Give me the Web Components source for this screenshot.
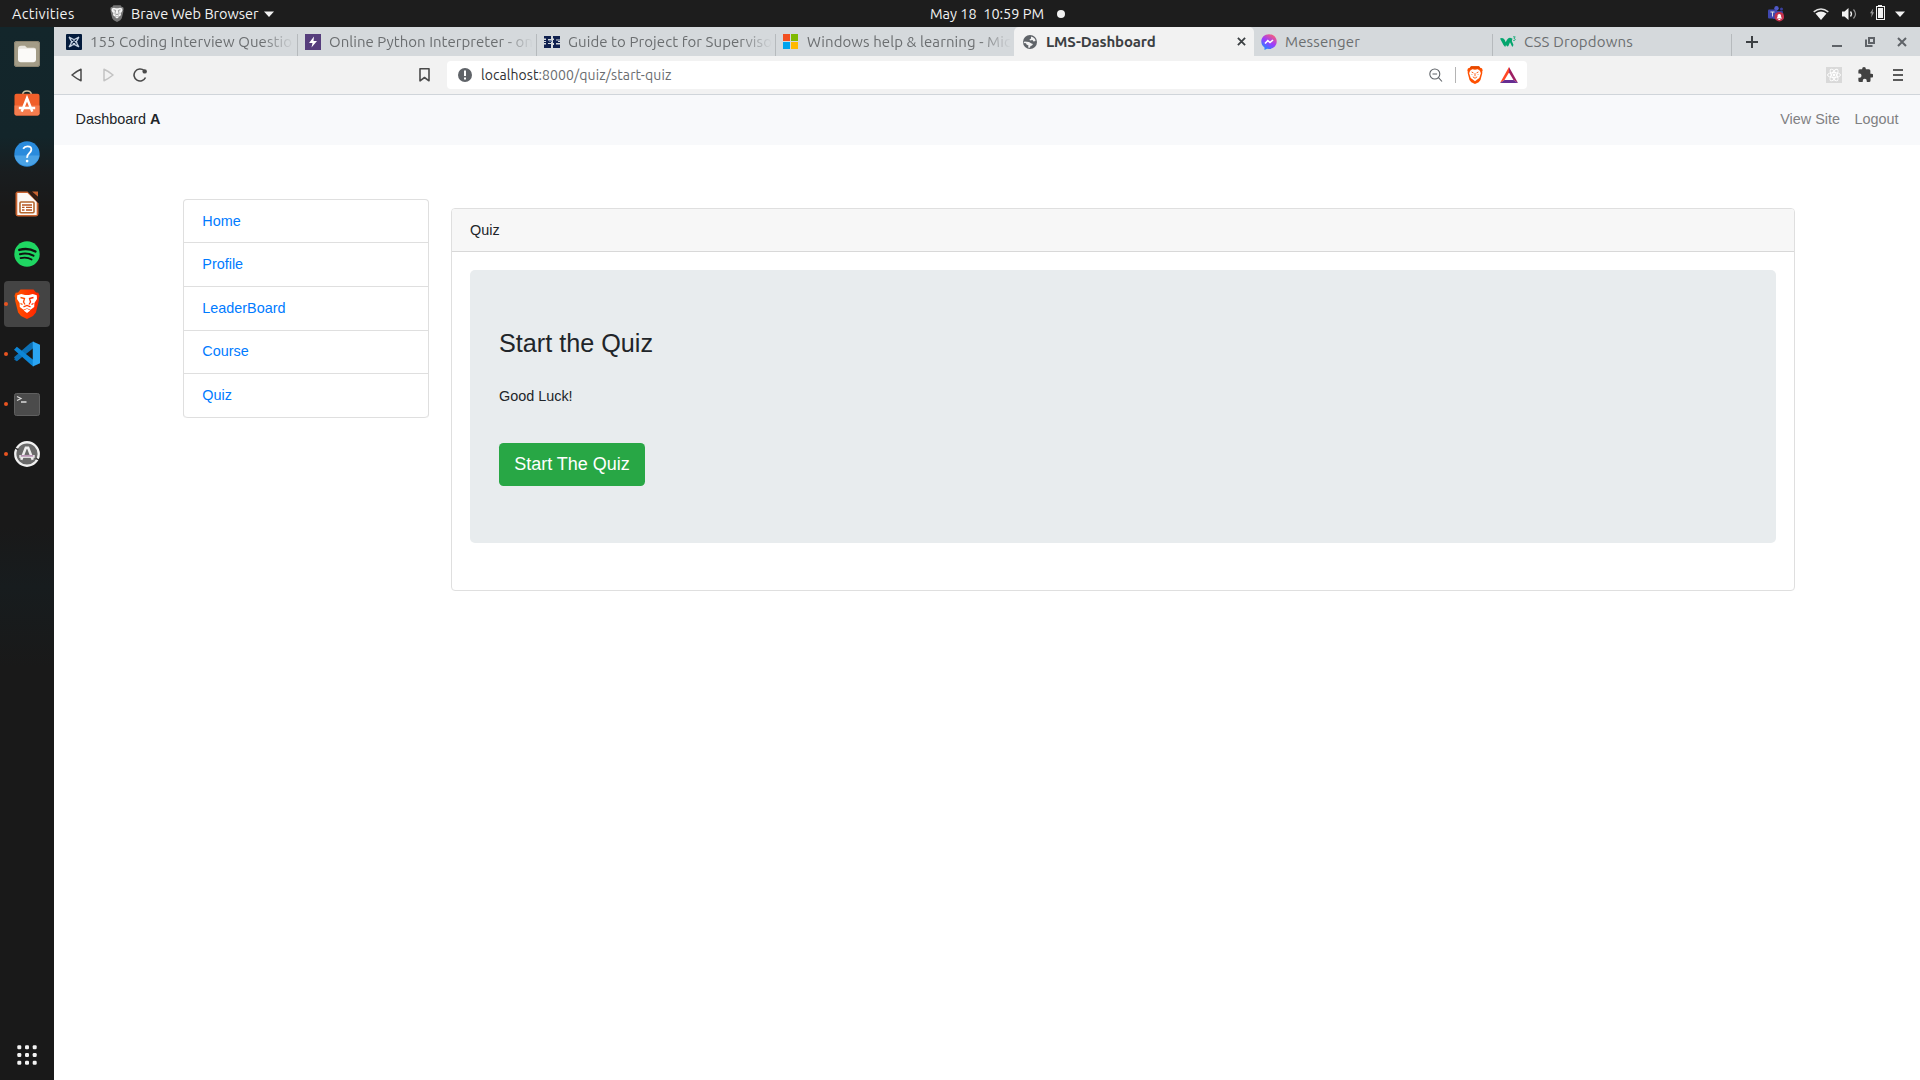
<!DOCTYPE html>
<html lang="en">
<head>
<meta charset="utf-8">
<title>LMS-Dashboard</title>
<style>
html,body{margin:0;height:100%;overflow:hidden;background:#fff}
body{font-family:"Liberation Sans",Arial,sans-serif;font-size:14.4px;color:#212529}
</style>
</head>
<body>
<desk-top></desk-top>
<script>
const UI = 'Ubuntu,"Noto Sans","Open Sans",sans-serif';
function define(name, html, after) {
  const t = document.createElement('template');
  t.innerHTML = html;
  customElements.define(name, class extends HTMLElement {
    connectedCallback() {
      if (this.shadowRoot) return;
      this.attachShadow({mode: 'open'}).append(t.content.cloneNode(true));
      if (after) after(this, this.shadowRoot);
    }
  });
}

/* Interface label: spaces its letters so that the line takes the width given in w. */
define('ui-label', `<style>:host{display:inline-block;white-space:pre;font-family:${UI}}span{display:inline-block;white-space:pre}</style><span><slot></slot></span>`, (el, root) => {
  const s = root.querySelector('span'), w = +el.getAttribute('w');
  if (w) {
    const n = el.textContent.length;
    s.style.letterSpacing = ((w - s.getBoundingClientRect().width) / n) + 'px';
  }
});

/* Icons */
const lion = (a, b) => `<path fill="${a}" d="M6.500.5h13l2.500 3 2.300.2 1.200 3.300-.8 2.500.2 2-3 12L19 27l-6 3-6-3-2.900-3.500-3-12 .2-2L.5 7l1.200-3.300L4 3.500z"/><path fill="${b}" d="M3.200 6.300L7.300 4.900l3.700 1h4l3.700-1 4.100 1.400.2 3.700-2.600 4-.2 4-3.700 2.700L13 19.300l-3.500 1.400L5.800 18l-.2-4L3 10zM9.700 21.500l3.300-1.700 3.300 1.700-3.300 2.500z"/><path d="M6.500 8.500L10.500 9.500 9.500 13l1.500 2.500M19.500 8.500L15.500 9.500l1 3.500-1.500 2.500M6.500 14.500l2 1M19.500 14.500l-2 1M9.500 17.800l3.500-1.300 3.500 1.300" fill="none" stroke="${a}" stroke-width="1.300"/>`;
const ICONS = {
  lion: [26, 30, `<defs><linearGradient id="g"><stop stop-color="#ff5500"/><stop offset="1" stop-color="#ff2000"/></linearGradient></defs>` + lion('url(#g)', '#fff')],
  liongrey: [26, 30, lion('#777', '#f4f4f4')],
  shield: [26, 30, `<path fill="#ff5000" d="M6.500.5h13l2.500 3 2.300.2 1.200 3.300-.8 2.500.2 2-3 12L19 27l-6 3-6-3-2.900-3.500-3-12 .2-2L.5 7l1.200-3.300L4 3.500z"/><path fill="#fff" d="M5 8l3.500-2.500 4.500.7 4.500-.7L21 8l1.500 4-2.500 8-4 3-3 2.500L10 23l-4-3-2.500-8z"/><path d="M7.500 10l3 1.500M18.500 10l-3 1.500M8 14v1M18 14v1M13 12v5M9.500 18l3.500 2.500 3.500-2.500" fill="none" stroke="#ff5000" stroke-width="1.500"/><path fill="#e34800" d="M6.500.5h13L22 4H4z"/>`],
  down: [10, 6, `<path fill="#f2f2f2" d="M0 .5h10L5 6z"/>`],
  coding: [16, 16, `<rect width="16" height="16" rx="1" fill="#031b3c"/><g fill="none" stroke="#c5d2e2" stroke-width="1.100"><path d="M3 3q5 4.500 10 0M3 13q5-4.500 10 0M3 3q4.500 5 0 10M13 3q-4.500 5 0 10M3 3q7 3 10 10M13 3q-7 3-10 10M3 3q3 7 10 10M13 3q-3 7-10 10"/></g>`],
  bolt: [16, 16, `<rect width="16" height="16" fill="#563d7c"/><path fill="#fff" d="M9 2.500L4 9h3.500L6.500 13.500 12 7H8.500z"/>`],
  guide: [16, 14, `<path fill="#10214f" d="M0 1h7v3H4v1.500h3V8H4v1h3v4H0v-3.500h2V8H0V5h2V3.500H0zM9 1h7v3.500h-4v1h4V8h-4v1.500h4V13H9v-3h1V8H9V5h1V3.500H9z"/><path fill="#5a6f98" d="M5 5.500h3v1.500H5z"/><path d="M0 6.500h2M14 6.500h2" stroke="#d5d9dc"/>`],
  windows: [15, 15, `<path fill="#f25022" d="M0 0h7v7H0z"/><path fill="#7fba00" d="M8 0h7v7H8z"/><path fill="#00a4ef" d="M0 8h7v7H0z"/><path fill="#ffb900" d="M8 8h7v7H8z"/>`],
  globe: [14, 14, `<circle cx="7" cy="7" r="7" fill="#5f6368"/><path fill="#f2f2f2" d="M8 1.500c3 .5 4.500 2.500 4.500 4.500l-2 .5-1-1.500-2.500.5-.5-1 1.500-1zM1.500 6.500l4.500.5 2.500 1.500 1.500.5-1 1.500-1.500.5-.5 1.700-2-.2.500-2-2-1-.5-1.200-2.500-.3z"/>`],
  messenger: [16, 16, `<defs><linearGradient id="m" x1=".2" y1="1" x2=".8" y2="0"><stop stop-color="#1490ff"/><stop offset=".5" stop-color="#9a3cff"/><stop offset="1" stop-color="#ff6070"/></linearGradient></defs><path fill="url(#m)" d="M8 .3c4.500 0 7.700 3.200 7.700 7.300S12.500 15 8 15l-2-.2L3.500 16v-2.500C1.500 12.200.3 10.200.3 7.600.3 3.500 3.500.3 8 .3z"/><path d="M4 9.500L6.800 6.700 9 8.500l3-2.500" fill="none" stroke="#fff" stroke-width="1.600"/>`],
  w3: [16, 12, `<path fill="#04a56d" d="M0 2.500Q3 .8 4.800 4l.9 2.200L7 3.800Q8.800.8 11 2l1.500.8Q12 4 11.800 5l1.700 4-1.200 2L10 6.200 8.600 9.500Q7.500 11.500 6 9L5.200 11 3.500 9z"/><path d="M13 .8h2.200L14 2.500c2 0 1.500 2.500-.8 2" fill="none" stroke="#04a56d" stroke-width=".8"/>`],
  x: [10, 10, `<path d="M1 1l8 8M9 1L1 9" stroke="currentColor" stroke-width="2"/>`],
  plus: [12, 12, `<path d="M6 0v12M0 6h12" stroke="#3c4043" stroke-width="2"/>`],
  min: [10, 10, `<path d="M0 9h10" stroke="#5f6368" stroke-width="2"/>`],
  restore: [10, 10, `<path d="M4 1h5v5H4zM1 2.500V9h6.500" fill="none" stroke="#5f6368" stroke-width="2"/>`],
  back: [11, 14, `<path d="M10 1.300v11.400Q6 11 1 7 6 3 10 1.300z" fill="none" stroke="#4a4a4a" stroke-width="1.500" stroke-linejoin="round"/>`],
  fwd: [11, 14, `<path d="M1 1.300v11.400Q5 11 10 7 5 3 1 1.300z" fill="none" stroke="#c3c3c3" stroke-width="1.500" stroke-linejoin="round"/>`],
  reload: [14, 14, `<path d="M11.200 2.700A6 6 0 1 0 12.500 9.500" fill="none" stroke="#4a4a4a" stroke-width="1.600"/><circle cx="11.700" cy="3.400" r="2.200" fill="#4a4a4a"/>`],
  mark: [11, 14, `<path d="M1 .8h9v12L5.500 9.500 1 12.800z" fill="none" stroke="#4a4a4a" stroke-width="1.600" stroke-linejoin="round"/>`],
  info: [14, 14, `<circle cx="7" cy="7" r="7" fill="#5f6368"/><path fill="#fff" d="M6 2.500h2v5.500H6zM6 9.500h2v2H6z"/>`],
  zoomout: [14, 14, `<circle cx="5.800" cy="6" r="5" fill="none" stroke="#5f6368" stroke-width="1.100"/><path d="M3.500 6h4.600M9.500 9.700L13 13.500" stroke="#5f6368" stroke-width="1.100"/>`],
  bat: [18, 16, `<path fill="#ff4724" d="M9 0v5.500L4.500 13 0 16z"/><path fill="#9e1f63" d="M9 0l9 16-4.500-3L9 5.500z"/><path fill="#662d91" d="M0 16l4.500-3h9l4.500 3z"/>`],
  react: [16, 16, `<path fill="#d9d9d9" d="M0 0h16v16H0z"/><g fill="none" stroke="#fff" stroke-width=".9"><ellipse cx="8" cy="8" rx="6.500" ry="2.500"/><ellipse cx="8" cy="8" rx="6.500" ry="2.500" transform="rotate(60 8 8)"/><ellipse cx="8" cy="8" rx="6.500" ry="2.500" transform="rotate(120 8 8)"/></g><circle cx="8" cy="8" r="1.400" fill="#fff"/>`],
  puzzle: [20, 20, `<path fill="#424242" d="M18 9h-1.500V5a2 2 0 0 0-2-2h-4V2.500a2.500 2.500 0 0 0-5 0V3h-3a2 2 0 0 0-2 2v3.800H2a2.700 2.700 0 0 1 0 5.400H.5V18a2 2 0 0 0 2 2h3.800v-1.500a2.700 2.700 0 0 1 5.400 0V20h3a2 2 0 0 0 2-2v-4H18a2.500 2.500 0 0 0 0-5z"/>`],
  menu: [10, 12, `<path d="M0 1h10M0 6h10M0 11h10" stroke="#5a5a5a" stroke-width="2"/>`],
  teams: [16, 16, `<circle cx="8.500" cy="2.200" r="2.200" fill="#5059c9"/><circle cx="13.500" cy="3" r="1.500" fill="#3a3f9c"/><rect x="5" y="5" width="10" height="8" rx="1" fill="#3a3f9c"/><rect y="3.500" width="9" height="9" rx="1" fill="#4048b0"/><path d="M2.500 6h4M4.500 6v4.500" stroke="#ddd" stroke-width="1"/><circle cx="11.300" cy="10.700" r="4.800" fill="#c4314b"/><path fill="#fff" d="M8.500 12.500l1-1.500V9.700a1.800 1.800 0 0 1 3.600 0V11l1 1.500zM10.300 13h2v1h-2z"/>`],
  wifi: [16, 12, `<path fill="#f2f2f2" d="M8 12L2.500 5.500Q8 1.500 13.500 5.500z"/><path d="M.7 3.800q7.300-5.500 14.600 0" fill="none" stroke="#e0e0e0" stroke-width="1.500"/>`],
  volume: [15, 12, `<path fill="#f2f2f2" d="M0 3.500h2.500L6.500 0v12L2.500 8.500H0z"/><path d="M8.500 3.500q2 2.500 0 5" fill="none" stroke="#f2f2f2" stroke-width="1.300"/><path d="M11.500 1.500q4 4.500 0 9" fill="none" stroke="#999" stroke-width="1.200"/>`],
  battery: [15, 15, `<path fill="#999" d="M3.200 3.500L0 8.200h1.700L1.200 12.500 4 7.300H2.500z"/><path fill="#f2f2f2" d="M8 0h4v1h3v14H6V1h2z"/><path fill="#1d1d1d" d="M7 2h7v12H7z"/><path fill="#f2f2f2" d="M8 3h5v10H8z"/>`],
  files: [26, 27, `<rect width="26" height="27" rx="3" fill="#a39c87"/><rect x=".5" y=".5" width="25" height="26" rx="2.500" fill="none" stroke="#8b8470"/><path fill="#e9e6df" d="M4 8q0-3 3-3h4l2 2h7q2 0 2 2v4H4z"/><rect x="4" y="8" width="18" height="14" rx="2.500" fill="#fbfaf8"/>`],
  software: [27, 27, `<path d="M9 5q0-4 4.500-4T18 5" fill="none" stroke="#cfc2a0" stroke-width="1.500"/><rect x=".5" y="4" width="26" height="22.500" rx="2" fill="#f05f2a"/><path fill="#f57c4e" d="M.5 16h26v8.500q0 2-2 2h-22q-2 0-2-2z"/><path d="M8 22.500l5.500-14L19 22.500M5 18.700h17" fill="none" stroke="#fff" stroke-width="2.600"/>`],
  help: [27, 27, `<circle cx="13.500" cy="13.500" r="13.200" fill="#2a8bdc"/><path fill="#4aa2e5" d="M.5 15a13.200 13.200 0 0 0 26 0z"/><path d="M9.500 8q1.500-2.500 4.500-2.500 4.300 0 4 3.800-.2 1.900-2.200 3.400-2.300 1.800-2.200 4.800" fill="none" stroke="#fff" stroke-width="1.900"/><circle cx="13.600" cy="20.800" r="1.400" fill="#fff"/>`],
  impress: [24, 27, `<path fill="#c8622f" d="M2 .5h10.500L23.500 13v11q0 2.500-2.500 2.500H3Q.5 26.500.5 24V2z"/><path fill="#fbf7f4" d="M2.300 2h10.200L21.700 11.500v13.300H2.300z"/><path fill="#3a1c10" d="M14 .5L23 11V7L16.500.5z"/><path fill="#c8622f" d="M17 .5h6V6z"/><rect x="5" y="11.500" width="14" height="11" rx="1" fill="#fff" stroke="#b5672f" stroke-width="1.600"/><path d="M7 14.500h10M7 17h2.500M11 17h6M7 19.800h2.500M11 19.800h6" stroke="#b5531f" stroke-width="1.500"/>`],
  spotify: [27, 27, `<circle cx="13.500" cy="13.500" r="13.200" fill="#1fd662"/><g fill="none" stroke="#111" stroke-linecap="round"><path d="M5.500 9.300q9-2.600 16.800 1.600" stroke-width="2.500"/><path d="M6.200 13.700q7.500-2 14 1.600" stroke-width="2.100"/><path d="M6.800 17.800q6.500-1.600 11.500 1.500" stroke-width="1.800"/></g>`],
  code: [27, 27, `<path fill="#0a66a8" d="M0 19l2.500 2L20 6V.5z"/><path fill="#0c70b5" d="M0 17l3 4L20.500 7V.5L17 2z"/><path fill="#0d86d6" d="M0 9l3-3 17.500 14v6.500L18 25z"/><path fill="#2aa5f3" d="M19.500.5L27 4v19l-7.500 3.500z"/>`],
  terminal: [26, 23, `<rect x=".5" y=".5" width="25" height="22" rx="2" fill="#4b4b4b" stroke="#606060"/><path d="M3 3.500l4 2-4 2" fill="none" stroke="#ddd" stroke-width="1.200"/><path d="M7 9h5.500" stroke="#fff" stroke-width="1.200"/>`],
  updater: [27, 27, `<circle cx="13.500" cy="13.500" r="12.200" fill="#6a6a6a" stroke="#f0f0f0" stroke-width="2.400"/><path d="M7.500 19.500L12.300 7h2.400l4.800 12.500" fill="none" stroke="#eee" stroke-width="2.600"/><path d="M5.500 16h16" stroke="#eee" stroke-width="3"/><path d="M7 15.500h13" stroke="#8b4a86" stroke-width="1"/><path d="M1 7.500l3.500 1.500M26 19.500L22.500 18" stroke="#333" stroke-width="1.400"/>`],
  grid: [20, 20, [2.3, 10, 17.7].map(y => [2.3, 10, 17.7].map(x => `<rect x="${x - 2}" y="${y - 2}" width="4" height="4" rx="1.200" fill="#f2f2f2"/>`).join('')).join('')]
};
define('ui-icon', `<style>:host{display:block;flex:none}svg{display:block;width:100%;height:100%}</style>`, (el, root) => {
  const [w, h, body] = ICONS[el.getAttribute('name')];
  el.style.width = (el.getAttribute('w') || w) + 'px';
  el.style.height = (el.getAttribute('h') || h) + 'px';
  const box = document.createElement('div');
  box.style.cssText = 'width:100%;height:100%';
  box.innerHTML = `<svg viewBox="0 0 ${w} ${h}" preserveAspectRatio="none">${body}</svg>`;
  root.append(box);
});

/* System bar */
define('system-bar', `<style>
:host{display:grid;grid-template-columns:930px 1fr auto;height:27px;background:#1d1d1d;color:#f2f2f2;font-size:14.500px;line-height:26px}
div{display:flex;align-items:center}
.l{padding-left:12px}.r{padding-right:15px}
</style>
<div class="l"><ui-label w="62.500">Activities</ui-label><ui-icon name="liongrey" w="14" h="17" style="margin-left:35.500px"></ui-icon><ui-label w="127.500" style="margin-left:7px">Brave Web Browser</ui-label><ui-icon name="down" style="margin-left:5px"></ui-icon></div>
<div><ui-label w="114">May 18  10:59 PM</ui-label><span style="width:8px;height:8px;border-radius:50%;background:#f2f2f2;margin-left:13px"></span></div>
<div class="r"><ui-icon name="teams"></ui-icon><ui-icon name="wifi" style="margin-left:29px"></ui-icon><ui-icon name="volume" style="margin-left:13px"></ui-icon><ui-icon name="battery" style="margin-left:13px;margin-top:-2px"></ui-icon><ui-icon name="down" style="margin-left:10px"></ui-icon></div>`);

/* Dock */
define('dock-item', `<style>
:host{display:flex;position:relative;width:46px;height:46px;margin:2px 4px;border-radius:4px;align-items:center;justify-content:center}
:host([active]){background:#444}
:host([running])::before{content:"";position:absolute;left:0;top:21px;width:4px;height:4px;border-radius:50%;background:#e95420}
.b{display:flex}
</style><div class="b"></div>`, (el, root) => {
  const name = el.getAttribute('icon'), [w, h] = ICONS[name], b = root.querySelector('.b');
  b.innerHTML = `<ui-icon name="${name}" w="${w - w % 2}" h="${name === 'terminal' ? 23 : h - h % 2}"></ui-icon>`;
  if (name === 'software') b.style.paddingBottom = '2px';
});
define('app-dock', `<style>
:host{display:flex;flex-direction:column;justify-content:space-between;width:54px;flex:none;box-sizing:border-box;padding:2px 0 0;background:linear-gradient(#13262b 0,#13252a 110px,#191d1f 145px,#191919 180px,#191919 500px,#171c1e 560px,#191919 640px)}
nav{display:flex;flex-direction:column}
</style><nav>
<dock-item icon="files"></dock-item><dock-item icon="software"></dock-item><dock-item icon="help"></dock-item><dock-item icon="impress"></dock-item><dock-item icon="spotify"></dock-item><dock-item icon="lion" active running></dock-item><dock-item icon="code" running></dock-item><dock-item icon="terminal" running></dock-item><dock-item icon="updater" running></dock-item></nav><dock-item icon="grid"></dock-item>`);

/* Browser tabs */
define('browser-tab', `<style>
:host{display:flex;align-items:center;position:relative;width:239px;height:29px;box-sizing:border-box;padding-left:8px;flex:none;color:#6b6e70;font-size:15px}
:host(:not([active]):not([nosep]))::after{content:"";position:absolute;right:-1px;top:7px;bottom:0;width:1px;background:#b6babd}
:host([late])::after{right:0!important}
.i{width:16px;display:flex;justify-content:flex-start;flex:none}
.t{margin-left:8px;width:204px;overflow:hidden;white-space:nowrap;line-height:28px}
:host([fade]) .t{-webkit-mask:linear-gradient(90deg,#000 172px,transparent 204px)}
:host([active]){background:#f2f2f2;border-radius:5px 5px 0 0;color:#3c4043;font-weight:600;width:240px}
:host([active]) .i{justify-content:center}
:host([active]) .t{width:191px}
:host([late]){padding-left:7px}
.x{color:#3c4043}
:host(:not([active])) .x{display:none}
</style><div class="i"></div><div class="t"><slot></slot></div><ui-icon class="x" name="x" w="9" h="9"></ui-icon>`, (el, root) => {
  root.querySelector('.i').innerHTML = `<ui-icon name="${el.getAttribute('icon')}"></ui-icon>`;
});
define('tab-strip', `<style>
:host{display:flex;height:29px;background:#d5d9dc;padding-left:4px}
.c{display:flex;align-items:center;gap:22.500px;margin-left:auto;padding-right:13px;color:#5f6368}
</style>
<browser-tab icon="coding" fade><ui-label w="202">155 Coding Interview Questio</ui-label></browser-tab>
<browser-tab icon="bolt" fade><ui-label w="204">Online Python Interpreter - on</ui-label></browser-tab>
<browser-tab icon="guide" fade><ui-label w="204">Guide to Project for Superviso</ui-label></browser-tab>
<browser-tab icon="windows" fade nosep><ui-label w="204">Windows help &amp; learning - Mic</ui-label></browser-tab>
<browser-tab icon="globe" active><ui-label w="109.500">LMS-Dashboard</ui-label></browser-tab>
<browser-tab icon="messenger" late><ui-label w="75">Messenger</ui-label></browser-tab>
<browser-tab icon="w3" late><ui-label w="109">CSS Dropdowns</ui-label></browser-tab>
<ui-icon name="plus" style="margin:9px 0 0 14px"></ui-icon>
<div class="c"><ui-icon name="min"></ui-icon><ui-icon name="restore"></ui-icon><ui-icon name="x"></ui-icon></div>`);

/* Address toolbar */
define('tool-bar', `<style>
:host{display:flex;align-items:center;height:38px;background:#f2f2f2;border-bottom:1px solid #d0d5da;padding:0 17px 0 17px}
.n{display:flex;align-items:center;width:376px}
.u{display:flex;align-items:center;box-sizing:border-box;width:1080px;height:28px;border-radius:4px;background:#fff;padding:0 9px 0 11px;font-size:14px;color:#6a6d70}
.s{width:1px;height:16px;background:#b4b4b4;margin:0 11px 0 12px}
.e{display:flex;align-items:center;margin-left:auto}
</style>
<div class="n"><ui-icon name="back"></ui-icon><ui-icon name="fwd" style="margin-left:21px"></ui-icon><ui-icon name="reload" style="margin-left:19px"></ui-icon><ui-icon name="mark" style="margin-left:272px"></ui-icon></div>
<div class="u"><ui-icon name="info"></ui-icon><ui-label w="57.500" style="margin-left:9px;color:#303133">localhost</ui-label><ui-label w="133">:8000/quiz/start-quiz</ui-label><ui-icon name="zoomout" style="margin-left:auto"></ui-icon><span class="s"></span><ui-icon name="shield" w="16" h="18"></ui-icon><ui-icon name="bat" style="margin-left:17px"></ui-icon></div>
<div class="e"><ui-icon name="react"></ui-icon><ui-icon name="puzzle" w="15" h="15" style="margin:-1px 0 0 16px"></ui-icon><ui-icon name="menu" style="margin-left:20px"></ui-icon></div>`);

/* Page */
define('site-nav', `<style>
:host{display:flex;align-items:center;justify-content:space-between;height:50px;box-sizing:border-box;padding:0 21.600px 2px;background:#f8f9fb}
a{color:#7f8082}div{display:flex;gap:14.400px}
</style><span>Dashboard <b>A</b></span><div><a>View Site</a><a>Logout</a></div>`);
define('side-menu', `<style>
:host{display:grid;grid-template-rows:43px 44px 44px 43px 44px;box-sizing:border-box;width:246px;border:1px solid #dfdfdf;border-bottom:0;border-radius:4px;color:#007bff;line-height:22px}
a{box-sizing:border-box;padding:10px 18.300px;border-bottom:1px solid #dfdfdf}
a:last-child{border-radius:0 0 4px 4px}
a:nth-of-type(4){padding-top:9px}
</style><a>Home</a><a>Profile</a><a>LeaderBoard</a><a>Course</a><a>Quiz</a>`);
define('quiz-card', `<style>
:host{display:flex;flex-direction:column;box-sizing:border-box;width:1344px;height:383px;border:1px solid #dfdfdf;border-radius:4px;margin-top:9px}
header{height:42px;line-height:42px;padding-left:18px;background:#f7f7f7;border-bottom:1px solid #d8d8d8;border-radius:3px 3px 0 0}
section{margin:18px 18px 0;height:273px;box-sizing:border-box;background:#e8ecee;border-radius:5px;padding:57.500px 29px 0;display:flex;flex-direction:column;align-items:flex-start}
h1{font-size:25.200px;font-weight:400;line-height:30px;margin:0}
p{margin:27px 0 0;line-height:22px}
button{font:18px/27px "Liberation Sans",Arial,sans-serif;color:#fff;background:#28a745;border:0;border-radius:4.500px;width:146px;height:43px;padding:0;margin-top:36.500px}
</style><header>Quiz</header><section><h1>Start the Quiz</h1><p>Good Luck!</p><button>Start The Quiz</button></section>`);
define('browser-window', `<style>
:host{display:flex;flex-direction:column;flex:1;min-width:0;background:#fff}
main{display:flex;align-items:flex-start;gap:22px;padding:54px 0 0 129px}
</style><tab-strip></tab-strip><tool-bar></tool-bar><site-nav></site-nav><main><side-menu></side-menu><quiz-card></quiz-card></main>`);
define('desk-top', `<style>
:host{display:flex;flex-direction:column;width:1920px;height:1080px;overflow:hidden}
div{display:flex;flex:1;min-height:0}
</style><system-bar></system-bar><div><app-dock></app-dock><browser-window></browser-window></div>`);
</script>
</body>
</html>
